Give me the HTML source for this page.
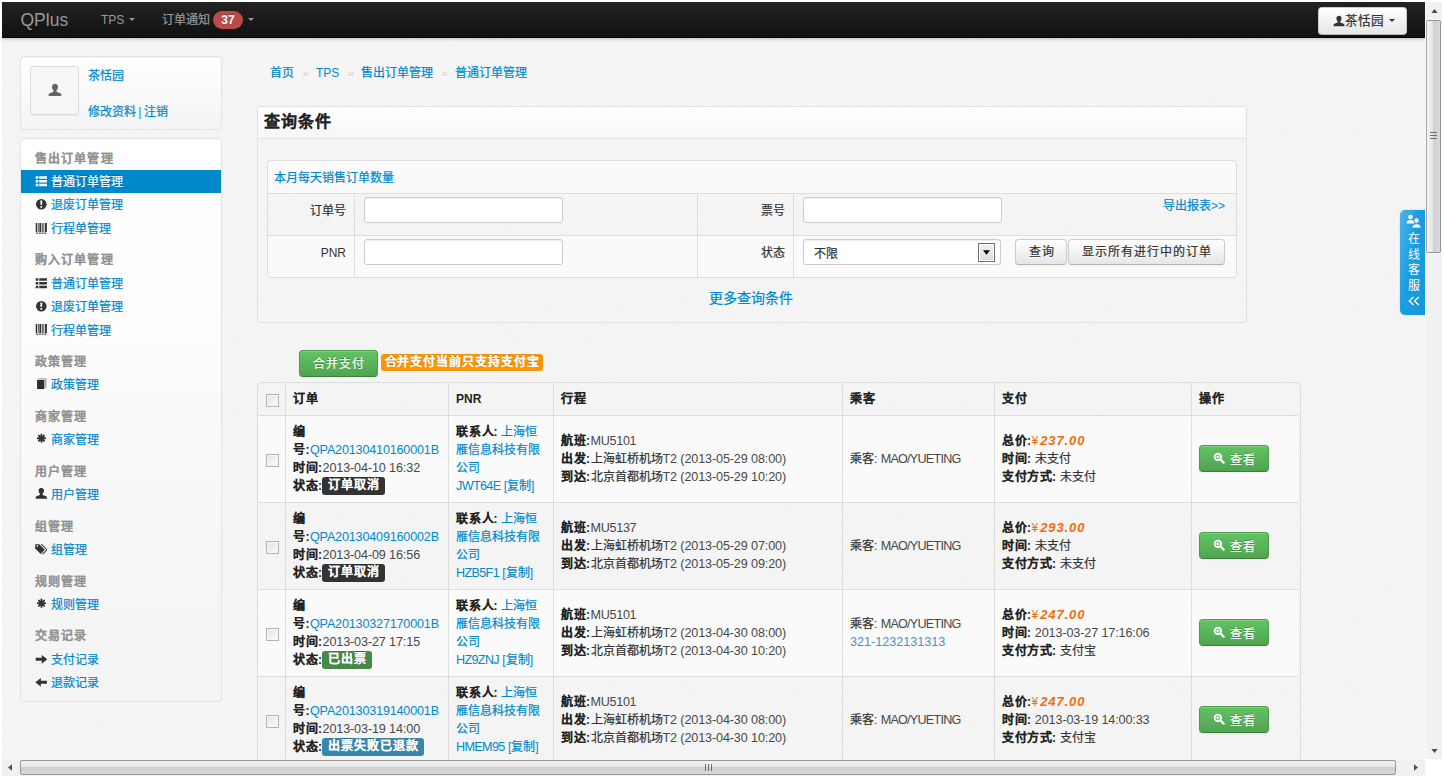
<!DOCTYPE html>
<html lang="zh-CN">
<head>
<meta charset="utf-8">
<title>QPlus - 普通订单管理</title>
<style>
*{box-sizing:border-box;}
html,body{margin:0;padding:0;}
body{width:1444px;height:778px;overflow:hidden;background:#fff;font-family:"Liberation Sans",sans-serif;font-size:12px;line-height:18px;color:#333;position:relative;}
a{color:#0088cc;text-decoration:none;}
b,th{font-weight:bold;letter-spacing:.5px;}
svg{display:block;}
.l{font-size:12.6px;}
span.l{color:#484848;}
a span.l{color:inherit;}
.c{display:inline-block;white-space:nowrap;text-align:justify;text-align-last:justify;letter-spacing:0;-webkit-text-stroke:.22px;}
b .c,th .c,.h .c,.lab .c,#ph .c{-webkit-text-stroke:.05px;}
#vp{position:absolute;left:2px;top:2px;width:1423px;height:758px;overflow:hidden;background-color:#f4f4f4;
 background-image:repeating-linear-gradient(45deg,rgba(255,255,255,.2) 0,rgba(255,255,255,.2) 1px,rgba(0,0,0,0) 1px,rgba(0,0,0,0) 3px),repeating-linear-gradient(-45deg,rgba(0,0,0,.008) 0,rgba(0,0,0,.008) 1px,rgba(0,0,0,0) 1px,rgba(0,0,0,0) 3px);}
.abs{position:absolute;white-space:nowrap;}
/* ---------- navbar ---------- */
#nav{position:absolute;left:0;top:0;width:1423px;height:36px;background:linear-gradient(#232323,#111);border-bottom:1px solid #050505;box-shadow:0 1px 3px rgba(0,0,0,.25);color:#999;}
#nav .brand{left:18.500px;top:5.500px;font-size:17.500px;line-height:24px;color:#999;}
#nav .it{top:9px;line-height:18px;color:#999;}
.caret{position:absolute;width:0;height:0;border-left:3.600px solid transparent;border-right:3.600px solid transparent;border-top:3.600px solid #999;}
.badge{position:absolute;left:211px;top:9px;width:30px;height:18px;border-radius:9px;background:#b94a48;color:#fff;font-weight:bold;font-size:12px;line-height:18px;text-align:center;text-shadow:0 -1px 0 rgba(0,0,0,.25);}
#ubtn{position:absolute;left:1316px;top:5px;width:89px;height:28px;border-radius:4px;border:1px solid #ccc;border-bottom-color:#b3b3b3;background:linear-gradient(#fff,#e6e6e6);color:#333;box-shadow:inset 0 1px 0 rgba(255,255,255,.2),0 1px 2px rgba(0,0,0,.05);}
#ubtn .t{left:26px;top:4px;font-size:12.600px;line-height:18px;color:#333;}
/* ---------- sidebar ---------- */
.card{position:absolute;left:18px;width:202px;border:1px solid #e3e3e3;border-radius:4px;box-shadow:inset 0 1px 1px rgba(0,0,0,.03);}
#ucard{top:54px;height:74px;background:linear-gradient(#fff,#f4f4f4);}
#avatar{position:absolute;left:9px;top:9px;width:49px;height:49px;border:1px solid #ddd;border-radius:3px;background:#f7f7f7;box-shadow:0 1px 1px rgba(0,0,0,.06);}
#snav{top:136px;height:564px;padding:7.200px 0;background:linear-gradient(#fff 0,#fdfdfd 30%,#f6f6f6 75%,#f4f4f4 100%);}
#snav .h{height:23.400px;line-height:23.400px;padding:1.500px 0 0 13.500px;color:#949494;font-weight:bold;letter-spacing:1.200px;margin-top:8.100px;white-space:nowrap;text-shadow:0 1px 0 rgba(255,255,255,.5);}
#snav .h.f{margin-top:0;}
#snav .i{display:block;height:23.400px;line-height:23.400px;padding:1.500px 0 0 30.400px;position:relative;white-space:nowrap;color:#0088cc;}
#snav .i svg{position:absolute;left:13.500px;top:5.400px;width:12.600px;height:12.600px;}
#snav .i.on{background:#0088cc;color:#fff;text-shadow:0 -1px 0 rgba(0,0,0,.2);}
/* ---------- scrollbars ---------- */
#vs{position:absolute;left:1425px;top:2px;width:17px;height:757px;background:linear-gradient(90deg,#fbfbfb 0,#f1f1f1 2px);}
#hs{position:absolute;left:2px;top:760px;width:1423px;height:16px;background:#f1f1f1;}
.thumbv{position:absolute;left:1px;top:18px;width:15px;height:233px;border:1px solid #979797;border-left-color:#a8a8a8;border-radius:2px;background:linear-gradient(90deg,#f3f3f3 0,#e6e6e8 45%,#cfd0d3 50%,#d7d8db 100%);}
.thumbh{position:absolute;left:18px;top:0;width:1376px;height:15px;border:1px solid #979797;border-radius:2px;background:linear-gradient(#f3f3f3 0,#e6e6e8 45%,#cfd0d3 50%,#d7d8db 100%);}
.grip{position:absolute;background:#6e6e6e;}
/* ---------- main ---------- */
#bc{left:268px;top:62px;line-height:18px;}
#bc .d{color:#ccc;padding:0 7.400px 0 8.400px;font-size:11px;text-shadow:0 1px 0 #fff;}
#panel{position:absolute;left:255px;top:104px;width:990px;height:217px;border:1px solid #e2e2e2;border-radius:3px;}
#ph{position:absolute;left:0;top:0;right:0;height:32px;background:linear-gradient(#fff,#f6f6f6);border-bottom:1px solid #e2e2e2;border-radius:3px 3px 0 0;}
#ph>span{position:absolute;left:6px;top:4px;font-size:16px;line-height:22px;font-weight:bold;letter-spacing:1px;color:#222;white-space:nowrap;}
#q{position:absolute;left:9px;top:53px;width:970px;height:118px;border:1px solid #ddd;border-radius:4px;}
#q .r{position:absolute;left:0;right:0;}
#q .vl{position:absolute;top:33px;bottom:0;width:1px;background:#ddd;}
#q .lb{position:absolute;text-align:right;width:78px;white-space:nowrap;color:#333;}
.inp{position:absolute;height:26px;width:199px;background:#fff;border:1px solid #ccc;border-radius:3px;box-shadow:inset 0 1px 1px rgba(0,0,0,.075);}
.btn{position:absolute;height:26px;border:1px solid #ccc;border-bottom-color:#b3b3b3;border-radius:4px;background:linear-gradient(#fff,#e6e6e6);color:#333;text-align:center;line-height:25.500px;font-size:12px;letter-spacing:1px;white-space:nowrap;box-shadow:inset 0 1px 0 rgba(255,255,255,.2),0 1px 2px rgba(0,0,0,.05);text-shadow:0 1px 1px rgba(255,255,255,.75);}
.gbtn{position:absolute;border:1px solid #4c9c4c;border-bottom-color:#3c7f3c;border-radius:4px;background:linear-gradient(#62c462,#51a351);color:#fff;text-shadow:0 -1px 0 rgba(0,0,0,.25);box-shadow:inset 0 1px 0 rgba(255,255,255,.2),0 1px 2px rgba(0,0,0,.05);white-space:nowrap;font-size:12px;letter-spacing:1px;}
.lab{display:inline-block;height:17.500px;line-height:17.500px;padding:0 6px;border-radius:3px;color:#fff;font-weight:bold;letter-spacing:.9px;text-shadow:0 -1px 0 rgba(0,0,0,.25);vertical-align:top;white-space:nowrap;}
/* ---------- orders table ---------- */
#tw{position:absolute;left:255px;top:380px;width:1044px;height:420px;border:1px solid #ddd;border-radius:4px 4px 0 0;overflow:hidden;}
#t{border-collapse:separate;border-spacing:0;table-layout:fixed;width:1040px;margin:0;}
#t th,#t td{padding:7px 7px 7px 7.500px;border-left:1px solid #ddd;border-top:1px solid #ddd;vertical-align:middle;text-align:left;line-height:18px;white-space:nowrap;overflow:hidden;color:#333;}
#t th{height:32px;border-top:0;color:#222;}
#t td{height:87px;}
#t th:first-child,#t td:first-child{border-left:0;}
#t tr.s td{background:rgba(255,255,255,.55);}
#t b{color:#222;}
.cb{display:block;width:13px;height:13px;border:1px solid #b4b4b4;background:linear-gradient(135deg,#e4e4e4,#fbfbfb);box-shadow:inset 0 0 0 1px #f6f6f6;position:relative;left:.5px;top:1.500px;}
.o{letter-spacing:-.18px;}
.dt{letter-spacing:-.12px;}
.pc{letter-spacing:-.65px;}
.fl{letter-spacing:-.3px;}
.nm{letter-spacing:-.75px;}
.yen{color:#f26c0d;}
.pr{color:#f26c0d;font-weight:bold;font-style:italic;font-size:13px;letter-spacing:.9px;padding-left:2px;}
.vb{position:relative;display:block;width:70px;height:27px;top:-1px;}
.vb .gbtn{left:0;top:0;width:70px;height:27px;line-height:28px;padding-left:30px;}
.vb svg{position:absolute;left:14px;top:7.300px;}
.ph{color:#4a8fd0;}
/* ---------- kefu tab ---------- */
#kf{position:absolute;left:1398px;top:208px;width:25px;height:105px;border-radius:5px 0 0 5px;background:linear-gradient(100deg,#4db5ea 0,#1c9de0 45%,#1597dc 100%);box-shadow:0 0 2px rgba(0,0,0,.15);color:#fff;font-size:12px;line-height:15.700px;text-align:center;padding:22px 0 0 3px;}
</style>
</head>
<body>
<div id="vp">

<!-- ================= NAVBAR ================= -->
<div id="nav">
  <a class="abs brand">QPlus</a>
  <span class="abs it" style="left:99px">TPS</span><i class="caret" style="left:127px;top:16px"></i>
  <span class="abs it" style="left:160px"><span class="c" style="width:48px">订单通知</span></span>
  <span class="badge">37</span><i class="caret" style="left:246px;top:16px"></i>
  <div id="ubtn">
    <svg class="abs" style="left:13.500px;top:6.500px" width="12" height="12" viewBox="0 0 14 14"><path fill="#333" d="M7 .8c1.800 0 3 1.400 3 3.300 0 1.300-.6 2.600-1.500 3.200v.9c0 .4.300.6.8.8l3 1.200c.7.300 1 .8 1 1.500V13H.7v-1.300c0-.7.300-1.200 1-1.500l3-1.200c.5-.2.8-.4.8-.8v-.9C4.600 6.700 4 5.400 4 4.100 4 2.200 5.200.8 7 .8z"/></svg>
    <span class="abs t"><span class="c" style="width:37.8px">茶恬园</span></span>
    <i class="caret" style="left:69.500px;top:11px;border-top-color:#333"></i>
  </div>
</div>

<!-- ================= USER CARD ================= -->
<div class="card" id="ucard">
  <div id="avatar">
    <svg class="abs" style="left:17px;top:16px" width="14" height="14" viewBox="0 0 14 14"><path fill="#666" d="M7 .8c1.800 0 3 1.400 3 3.300 0 1.300-.6 2.600-1.500 3.200v.9c0 .4.300.6.8.8l3 1.200c.7.300 1 .8 1 1.500V13H.7v-1.300c0-.7.300-1.200 1-1.500l3-1.200c.5-.2.8-.4.8-.8v-.9C4.600 6.700 4 5.400 4 4.100 4 2.200 5.200.8 7 .8z"/></svg>
  </div>
  <a class="abs" style="left:67px;top:10px"><span class="c" style="width:36px">茶恬园</span></a>
  <span class="abs" style="left:67px;top:46px;word-spacing:-1px"><a><span class="c" style="width:48px">修改资料</span></a> <span style="color:#0088cc">|</span> <a><span class="c" style="width:24px">注销</span></a></span>
</div>

<!-- ================= SIDE NAV ================= -->
<div class="card" id="snav">
  <div class="h f"><span class="c" style="width:78px">售出订单管理</span></div>
  <a class="i on"><svg viewBox="0 0 14 14"><path fill="#fff" d="M.8 1.300h2.900v2.900H.8zM4.700 1.300H13.300v2.900H4.700zM.8 5.500h2.900v2.900H.8zM4.700 5.500H13.300v2.900H4.700zM.8 9.700h2.900v2.900H.8zM4.700 9.700H13.300v2.900H4.700z"/></svg><span class="c" style="width:72px">普通订单管理</span></a>
  <a class="i"><svg viewBox="0 0 14 14"><circle cx="7" cy="6.900" r="5.900" fill="#333"/><path fill="#fff" d="M5.900 2.900h2.200l-.3 4.900H6.200zM6 8.800h2v2H6z"/></svg><span class="c" style="width:72px">退废订单管理</span></a>
  <a class="i"><svg viewBox="0 0 14 14"><path fill="#333" d="M.8 1h1.600v10.500H.8zM3.200 1h.9v10.500h-.9zM4.900 1h2v10.500h-2zM7.700 1h.9v10.500h-.9zM9.400 1h.9v10.500h-.9zM11.100 1h2.100v10.500h-2.100zM1.300 12h2v1.200h-2zM4.300 12h2v1.200h-2zM7.300 12h2v1.200h-2zM10.300 12h2v1.200h-2z"/></svg><span class="c" style="width:60px">行程单管理</span></a>
  <div class="h"><span class="c" style="width:78px">购入订单管理</span></div>
  <a class="i"><svg viewBox="0 0 14 14"><path fill="#333" d="M.8 1.300h2.900v2.900H.8zM4.700 1.300H13.300v2.900H4.700zM.8 5.500h2.900v2.900H.8zM4.700 5.500H13.300v2.900H4.700zM.8 9.700h2.900v2.900H.8zM4.700 9.700H13.300v2.900H4.700z"/></svg><span class="c" style="width:72px">普通订单管理</span></a>
  <a class="i"><svg viewBox="0 0 14 14"><circle cx="7" cy="6.900" r="5.900" fill="#333"/><path fill="#fff" d="M5.900 2.900h2.200l-.3 4.900H6.200zM6 8.800h2v2H6z"/></svg><span class="c" style="width:72px">退废订单管理</span></a>
  <a class="i"><svg viewBox="0 0 14 14"><path fill="#333" d="M.8 1h1.600v10.500H.8zM3.200 1h.9v10.500h-.9zM4.900 1h2v10.500h-2zM7.700 1h.9v10.500h-.9zM9.400 1h.9v10.500h-.9zM11.100 1h2.100v10.500h-2.100zM1.300 12h2v1.200h-2zM4.300 12h2v1.200h-2zM7.300 12h2v1.200h-2zM10.300 12h2v1.200h-2z"/></svg><span class="c" style="width:60px">行程单管理</span></a>
  <div class="h"><span class="c" style="width:51.6px">政策管理</span></div>
  <a class="i"><svg viewBox="0 0 14 14"><path fill="#2e2e2e" d="M2.300 2.100h8.100V12.300H2.300z"/><path fill="#777" d="M3.800 .5h8.700v10.400h-1V1.400H3.800z"/></svg><span class="c" style="width:48px">政策管理</span></a>
  <div class="h"><span class="c" style="width:51.6px">商家管理</span></div>
  <a class="i"><svg viewBox="0 0 14 14"><g stroke="#333" stroke-width="2.100" stroke-linecap="round"><path d="M7.200 1.700v8.200M3.100 5.800h8.200M4.300 2.900l5.800 5.800M10.100 2.900l-5.800 5.800"/></g></svg><span class="c" style="width:48px">商家管理</span></a>
  <div class="h"><span class="c" style="width:51.6px">用户管理</span></div>
  <a class="i"><svg viewBox="0 0 14 14"><path fill="#333" transform="translate(0 -1)" d="M7 .8c1.800 0 3 1.400 3 3.300 0 1.300-.6 2.600-1.500 3.200v.9c0 .4.300.6.8.8l3 1.200c.7.300 1 .8 1 1.500V13H.7v-1.300c0-.7.300-1.200 1-1.500l3-1.200c.5-.2.8-.4.8-.8v-.9C4.600 6.700 4 5.400 4 4.100 4 2.200 5.200.8 7 .8z"/></svg><span class="c" style="width:48px">用户管理</span></a>
  <div class="h"><span class="c" style="width:38.4px">组管理</span></div>
  <a class="i"><svg viewBox="0 0 14 14"><path fill="#333" d="M.2 1.900v4.100l6.100 6.100 4.600-4.600-6.100-6.100H.7c-.3 0-.5.200-.5.5zm2.300 2.200a.9.900 0 1 1 0-1.800.9.900 0 0 1 0 1.800z"/><path fill="none" stroke="#333" stroke-width="1.150" d="M7 1.200l6.300 6.300-4.900 4.900"/></svg><span class="c" style="width:36px">组管理</span></a>
  <div class="h"><span class="c" style="width:51.6px">规则管理</span></div>
  <a class="i"><svg viewBox="0 0 14 14"><g stroke="#333" stroke-width="2.100" stroke-linecap="round"><path d="M7.200 1.700v8.200M3.100 5.800h8.200M4.300 2.900l5.800 5.800M10.100 2.900l-5.800 5.800"/></g></svg><span class="c" style="width:48px">规则管理</span></a>
  <div class="h"><span class="c" style="width:51.6px">交易记录</span></div>
  <a class="i"><svg viewBox="0 0 14 14"><path fill="#333" d="M.8 5.400h6.700V2.100L13.600 7l-6.100 4.900V8.600H.8z"/></svg><span class="c" style="width:48px">支付记录</span></a>
  <a class="i"><svg viewBox="0 0 14 14"><path fill="#333" d="M13.200 5.400H6.500V2.100L.4 7l6.100 4.900V8.600h6.700z"/></svg><span class="c" style="width:48px">退款记录</span></a>
</div>

<!-- ================= BREADCRUMB ================= -->
<div style="position:absolute;left:255px;top:54px;width:1150px;height:32px;border-radius:4px;background:#f5f5f5"></div>
<div class="abs" id="bc"><a><span class="c" style="width:24px">首页</span></a><span class="d">»</span><a>TPS</a><span class="d">»</span><a><span class="c" style="width:72px">售出订单管理</span></a><span class="d">»</span><a><span class="c" style="width:72px">普通订单管理</span></a></div>

<!-- ================= QUERY PANEL ================= -->
<div id="panel">
  <div id="ph"><span><span class="c" style="width:67px">查询条件</span></span></div>
  <div id="q">
    <div class="r" style="top:0;height:33px;background:rgba(255,255,255,.55);border-bottom:1px solid #ddd;border-radius:4px 4px 0 0"><a class="abs" style="left:6px;top:8px"><span class="c" style="width:120px">本月每天销售订单数量</span></a></div>
    <div class="r" style="top:33px;height:42px;border-bottom:1px solid #ddd"></div>
    <div class="r" style="top:75px;height:41px;background:rgba(255,255,255,.55);border-radius:0 0 4px 4px"></div>
    <i class="vl" style="left:86px"></i><i class="vl" style="left:429px"></i><i class="vl" style="left:525px"></i>
    <span class="lb" style="left:0;top:41px"><span class="c" style="width:36px">订单号</span></span>
    <span class="lb" style="left:0;top:83px">PNR</span>
    <span class="lb" style="left:439px;top:41px"><span class="c" style="width:24px">票号</span></span>
    <span class="lb" style="left:439px;top:83px"><span class="c" style="width:24px">状态</span></span>
    <div class="inp" style="left:96px;top:36px"></div>
    <div class="inp" style="left:96px;top:78px"></div>
    <div class="inp" style="left:535px;top:36px"></div>
    <div class="inp" style="left:535px;top:78px;width:198px"><span class="abs" style="left:10px;top:4.800px;color:#333"><span class="c" style="width:24px">不限</span></span>
      <div style="position:absolute;right:5px;top:2.500px;width:17px;height:19px;border:1px solid #707070;background:linear-gradient(#f2f2f2,#dcdcdc);box-shadow:inset 0 0 0 1px #fff"><svg class="abs" style="left:4px;top:6px" width="7" height="5" viewBox="0 0 8 5"><path fill="#000" d="M0 0h8L4 5z"/></svg></div>
    </div>
    <a class="abs" style="right:11px;top:36px"><span class="c" style="width:48px">导出报表</span>&gt;&gt;</a>
    <div class="btn" style="left:747px;top:78px;width:52px"><span class="c" style="width:25px">查询</span></div>
    <div class="btn" style="left:800px;top:78px;width:157px"><span class="c" style="width:129px">显示所有进行中的订单</span></div>
  </div>
  <a class="abs" style="left:451.300px;top:181px;font-size:14px;line-height:20px"><span class="c" style="width:84px">更多查询条件</span></a>
</div>

<!-- ================= ACTIONS ================= -->
<div class="gbtn" style="left:297px;top:348px;width:79px;height:27px;line-height:27px;text-align:center"><span class="c" style="width:51px">合并支付</span></div>
<span class="lab abs" style="left:379px;top:352px;background:#f89406;height:17px;line-height:17px;padding:0 3.500px;letter-spacing:.9px"><span class="c" style="width:154.8px">合并支付当前只支持支付宝</span></span>

<!-- ================= ORDERS TABLE ================= -->
<div id="tw">
<table id="t">
  <colgroup><col style="width:26.500px"><col style="width:163px"><col style="width:105px"><col style="width:289px"><col style="width:152px"><col style="width:197px"><col style="width:107.500px"></colgroup>
  <tr><th><i class="cb"></i></th><th><span class="c" style="width:24.5px">订单</span></th><th style="letter-spacing:0">PNR</th><th><span class="c" style="width:24.5px">行程</span></th><th><span class="c" style="width:24.5px">乘客</span></th><th><span class="c" style="width:24.5px">支付</span></th><th><span class="c" style="width:24.5px">操作</span></th></tr>
  <tr class="s">
    <td><i class="cb"></i></td>
    <td><b><span class="c" style="width:12.5px">编</span></b><br><b><span class="c" style="width:12.5px">号</span>:</b><a class="l o">QPA20130410160001B</a><br><b><span class="c" style="width:25px">时间</span>:</b><span class="l dt">2013-04-10 16:32</span><br><b><span class="c" style="width:25px">状态</span>:</b><span class="lab" style="background:#333;margin-left:-1px"><span class="c" style="width:51.6px">订单取消</span></span></td>
    <td><b><span class="c" style="width:37.5px">联系人</span>:</b> <a><span class="c" style="width:36px">上海恒</span></a><br><a><span class="c" style="width:84px">雁信息科技有限</span></a><br><a><span class="c" style="width:24px">公司</span></a><br><a><span class="l pc">JWT64E</span> [<span class="c" style="width:24px">复制</span>]</a></td>
    <td><b><span class="c" style="width:25px">航班</span>:</b><span class="l fl">MU5101</span><br><b><span class="c" style="width:25px">出发</span>:</b><span class="c" style="width:72px">上海虹桥机场</span><span class="l dt">T2 (2013-05-29 08:00)</span><br><b><span class="c" style="width:25px">到达</span>:</b><span class="c" style="width:72px">北京首都机场</span><span class="l dt">T2 (2013-05-29 10:20)</span></td>
    <td><span class="c" style="width:24px">乘客</span>: <span class="l nm">MAO/YUETING</span></td>
    <td><b><span class="c" style="width:25px">总价</span>:</b><span class="yen">¥</span><span class="pr">237.00</span><br><b><span class="c" style="width:25px">时间</span>:</b> <span class="c" style="width:36px">未支付</span><br><b><span class="c" style="width:50px">支付方式</span>:</b> <span class="c" style="width:36px">未支付</span></td>
    <td><span class="vb"><span class="gbtn"><span class="c" style="width:25px">查看</span></span><svg width="12" height="12" viewBox="0 0 14 14"><circle cx="5.700" cy="5.700" r="3.800" fill="none" stroke="#fff" stroke-width="2.100"/><path stroke="#fff" stroke-width="2.500" stroke-linecap="round" d="M8.800 8.800l3.600 3.600"/><path stroke="#fff" stroke-width="1.300" d="M3.800 5.700h3.800M5.700 3.800v3.800"/></svg></span></td>
  </tr>
  <tr>
    <td><i class="cb"></i></td>
    <td><b><span class="c" style="width:12.5px">编</span></b><br><b><span class="c" style="width:12.5px">号</span>:</b><a class="l o">QPA20130409160002B</a><br><b><span class="c" style="width:25px">时间</span>:</b><span class="l dt">2013-04-09 16:56</span><br><b><span class="c" style="width:25px">状态</span>:</b><span class="lab" style="background:#333;margin-left:-1px"><span class="c" style="width:51.6px">订单取消</span></span></td>
    <td><b><span class="c" style="width:37.5px">联系人</span>:</b> <a><span class="c" style="width:36px">上海恒</span></a><br><a><span class="c" style="width:84px">雁信息科技有限</span></a><br><a><span class="c" style="width:24px">公司</span></a><br><a><span class="l pc">HZB5F1</span> [<span class="c" style="width:24px">复制</span>]</a></td>
    <td><b><span class="c" style="width:25px">航班</span>:</b><span class="l fl">MU5137</span><br><b><span class="c" style="width:25px">出发</span>:</b><span class="c" style="width:72px">上海虹桥机场</span><span class="l dt">T2 (2013-05-29 07:00)</span><br><b><span class="c" style="width:25px">到达</span>:</b><span class="c" style="width:72px">北京首都机场</span><span class="l dt">T2 (2013-05-29 09:20)</span></td>
    <td><span class="c" style="width:24px">乘客</span>: <span class="l nm">MAO/YUETING</span></td>
    <td><b><span class="c" style="width:25px">总价</span>:</b><span class="yen">¥</span><span class="pr">293.00</span><br><b><span class="c" style="width:25px">时间</span>:</b> <span class="c" style="width:36px">未支付</span><br><b><span class="c" style="width:50px">支付方式</span>:</b> <span class="c" style="width:36px">未支付</span></td>
    <td><span class="vb"><span class="gbtn"><span class="c" style="width:25px">查看</span></span><svg width="12" height="12" viewBox="0 0 14 14"><circle cx="5.700" cy="5.700" r="3.800" fill="none" stroke="#fff" stroke-width="2.100"/><path stroke="#fff" stroke-width="2.500" stroke-linecap="round" d="M8.800 8.800l3.600 3.600"/><path stroke="#fff" stroke-width="1.300" d="M3.800 5.700h3.800M5.700 3.800v3.800"/></svg></span></td>
  </tr>
  <tr class="s">
    <td><i class="cb"></i></td>
    <td><b><span class="c" style="width:12.5px">编</span></b><br><b><span class="c" style="width:12.5px">号</span>:</b><a class="l o">QPA20130327170001B</a><br><b><span class="c" style="width:25px">时间</span>:</b><span class="l dt">2013-03-27 17:15</span><br><b><span class="c" style="width:25px">状态</span>:</b><span class="lab" style="background:#468847;margin-left:-1px"><span class="c" style="width:38.7px">已出票</span></span></td>
    <td><b><span class="c" style="width:37.5px">联系人</span>:</b> <a><span class="c" style="width:36px">上海恒</span></a><br><a><span class="c" style="width:84px">雁信息科技有限</span></a><br><a><span class="c" style="width:24px">公司</span></a><br><a><span class="l pc">HZ9ZNJ</span> [<span class="c" style="width:24px">复制</span>]</a></td>
    <td><b><span class="c" style="width:25px">航班</span>:</b><span class="l fl">MU5101</span><br><b><span class="c" style="width:25px">出发</span>:</b><span class="c" style="width:72px">上海虹桥机场</span><span class="l dt">T2 (2013-04-30 08:00)</span><br><b><span class="c" style="width:25px">到达</span>:</b><span class="c" style="width:72px">北京首都机场</span><span class="l dt">T2 (2013-04-30 10:20)</span></td>
    <td><span class="c" style="width:24px">乘客</span>: <span class="l nm">MAO/YUETING</span><br><a class="ph l">321-1232131313</a></td>
    <td><b><span class="c" style="width:25px">总价</span>:</b><span class="yen">¥</span><span class="pr">247.00</span><br><b><span class="c" style="width:25px">时间</span>:</b> <span class="l dt">2013-03-27 17:16:06</span><br><b><span class="c" style="width:50px">支付方式</span>:</b> <span class="c" style="width:36px">支付宝</span></td>
    <td><span class="vb"><span class="gbtn"><span class="c" style="width:25px">查看</span></span><svg width="12" height="12" viewBox="0 0 14 14"><circle cx="5.700" cy="5.700" r="3.800" fill="none" stroke="#fff" stroke-width="2.100"/><path stroke="#fff" stroke-width="2.500" stroke-linecap="round" d="M8.800 8.800l3.600 3.600"/><path stroke="#fff" stroke-width="1.300" d="M3.800 5.700h3.800M5.700 3.800v3.800"/></svg></span></td>
  </tr>
  <tr>
    <td><i class="cb"></i></td>
    <td><b><span class="c" style="width:12.5px">编</span></b><br><b><span class="c" style="width:12.5px">号</span>:</b><a class="l o">QPA20130319140001B</a><br><b><span class="c" style="width:25px">时间</span>:</b><span class="l dt">2013-03-19 14:00</span><br><b><span class="c" style="width:25px">状态</span>:</b><span class="lab" style="background:#3a87ad;margin-left:-1px"><span class="c" style="width:90.3px">出票失败已退款</span></span></td>
    <td><b><span class="c" style="width:37.5px">联系人</span>:</b> <a><span class="c" style="width:36px">上海恒</span></a><br><a><span class="c" style="width:84px">雁信息科技有限</span></a><br><a><span class="c" style="width:24px">公司</span></a><br><a><span class="l pc">HMEM95</span> [<span class="c" style="width:24px">复制</span>]</a></td>
    <td><b><span class="c" style="width:25px">航班</span>:</b><span class="l fl">MU5101</span><br><b><span class="c" style="width:25px">出发</span>:</b><span class="c" style="width:72px">上海虹桥机场</span><span class="l dt">T2 (2013-04-30 08:00)</span><br><b><span class="c" style="width:25px">到达</span>:</b><span class="c" style="width:72px">北京首都机场</span><span class="l dt">T2 (2013-04-30 10:20)</span></td>
    <td><span class="c" style="width:24px">乘客</span>: <span class="l nm">MAO/YUETING</span></td>
    <td><b><span class="c" style="width:25px">总价</span>:</b><span class="yen">¥</span><span class="pr">247.00</span><br><b><span class="c" style="width:25px">时间</span>:</b> <span class="l dt">2013-03-19 14:00:33</span><br><b><span class="c" style="width:50px">支付方式</span>:</b> <span class="c" style="width:36px">支付宝</span></td>
    <td><span class="vb"><span class="gbtn"><span class="c" style="width:25px">查看</span></span><svg width="12" height="12" viewBox="0 0 14 14"><circle cx="5.700" cy="5.700" r="3.800" fill="none" stroke="#fff" stroke-width="2.100"/><path stroke="#fff" stroke-width="2.500" stroke-linecap="round" d="M8.800 8.800l3.600 3.600"/><path stroke="#fff" stroke-width="1.300" d="M3.800 5.700h3.800M5.700 3.800v3.800"/></svg></span></td>
  </tr>
</table>
</div>

<!-- ================= ONLINE SERVICE TAB ================= -->
<div id="kf">
  <svg class="abs" style="left:6px;top:4px" width="16" height="15" viewBox="0 0 16 15"><g fill="#fff"><circle cx="4.500" cy="3" r="2.300"/><path d="M.5 9.500c0-2 1.500-3.500 4-3.500s4 1.500 4 3.500z"/><circle cx="10.500" cy="6.500" r="2.600" stroke="#1c9de0" stroke-width=".8"/><path stroke="#1c9de0" stroke-width=".8" d="M6 14c0-2.300 1.800-4.200 4.500-4.200S15 11.700 15 14z"/></g></svg>
  在<br>线<br>客<br>服<br><svg class="abs" style="left:8px;top:86px" width="12" height="10" viewBox="0 0 12 10"><path fill="none" stroke="#fff" stroke-width="1.300" d="M5.500 1L1.200 5l4.300 4M10.800 1L6.500 5l4.300 4"/></svg>
</div>

</div>

<!-- ================= SCROLLBARS ================= -->
<div id="vs">
  <svg class="abs" style="left:5.500px;top:7px" width="7" height="4" viewBox="0 0 8 5"><path fill="#505050" d="M0 5l4-5 4 5z"/></svg>
  <div class="thumbv"><i class="grip" style="left:3px;top:111px;width:7px;height:1px"></i><i class="grip" style="left:3px;top:114px;width:7px;height:1px"></i><i class="grip" style="left:3px;top:117px;width:7px;height:1px"></i></div>
  <svg class="abs" style="left:5.500px;top:747px" width="7" height="4" viewBox="0 0 8 5"><path fill="#505050" d="M0 0l4 5 4-5z"/></svg>
</div>
<div id="hs">
  <svg class="abs" style="left:6px;top:4px" width="4" height="7" viewBox="0 0 5 8"><path fill="#505050" d="M5 0L0 4l5 4z"/></svg>
  <div class="thumbh"><i class="grip" style="left:684px;top:3px;width:1px;height:7px"></i><i class="grip" style="left:687px;top:3px;width:1px;height:7px"></i><i class="grip" style="left:690px;top:3px;width:1px;height:7px"></i></div>
  <svg class="abs" style="left:1412px;top:4px" width="4" height="7" viewBox="0 0 5 8"><path fill="#505050" d="M0 0l5 4-5 4z"/></svg>
</div>
</body>
</html>
